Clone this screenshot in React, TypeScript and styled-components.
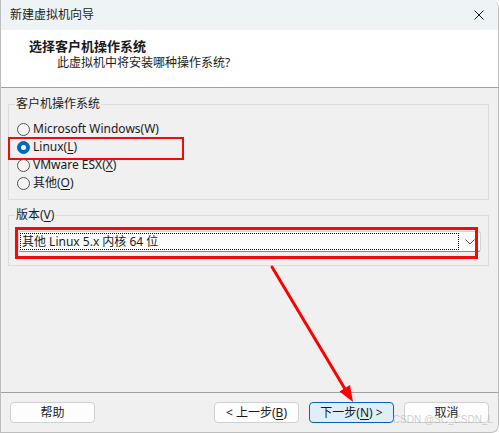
import React from 'react'
import styled, { createGlobalStyle } from 'styled-components'

const GlobalStyle = createGlobalStyle`
    html, body {
        margin: 0;
        padding: 0;
        background: #ffffff;
    }
    * {
        box-sizing: border-box;
    }
`

const FONT = `"Noto Sans", "Noto Sans CJK SC", sans-serif`

const Window = styled.div`
    position: relative;
    width: 499px;
    height: 433px;
    display: flex;
    flex-direction: column;
    background: #f0f0f0;
    border: 1px solid #bdbdbd;
    border-top: none;
    border-radius: 0 8px 8px 0;
    overflow: hidden;
    font: 400 12px/16px ${FONT};
    color: #1a1a1a;
`

const TitleBar = styled.div`
    height: 30px;
    flex: none;
    display: flex;
    align-items: center;
    justify-content: space-between;
    padding: 0 9px 0 9px;
    background: #eef4f5;
`

const CloseButton = styled.svg`
    width: 10px;
    height: 10px;
    margin-right: 5px;
`

const Header = styled.div`
    height: 58px;
    flex: none;
    padding: 8px 0 0 28px;
    background: #ffffff;
    border-bottom: 1px solid #a0a0a0;
`

const HeaderTitle = styled.div`
    font-size: 13px;
    font-weight: 700;
    line-height: 16px;
`

const HeaderSub = styled.div`
    margin: 1px 0 0 28px;
    line-height: 16px;
`

const Body = styled.div`
    flex: 1;
    padding: 8px 9px 0 7px;
    display: flex;
    flex-direction: column;
`

const Group = styled.fieldset<{ $gap?: number }>`
    margin: ${p => p.$gap ?? 0}px 0 0 0;
    padding: 8px 6px ${p => (p.$gap ? 13 : 7)}px 6px;
    border: 1px solid #dcdcdc;
    min-width: 0;
`

const Legend = styled.legend`
    padding: 0 1px;
    line-height: 16px;
`

const OptionList = styled.div`
    display: flex;
    flex-direction: column;
    padding-left: 2px;
`

const Option = styled.label`
    position: relative;
    height: 18px;
    display: flex;
    align-items: center;
    gap: 3px;
`

const RadioDot = styled.span<{ $checked?: boolean }>`
    width: 13px;
    height: 13px;
    border-radius: 50%;
    flex: none;
    display: flex;
    align-items: center;
    justify-content: center;
    background: ${p => (p.$checked ? '#0067c0' : '#f5f5f5')};
    border: 1px solid ${p => (p.$checked ? '#0067c0' : '#555555')};

    &::after {
        content: '';
        width: 5px;
        height: 5px;
        border-radius: 50%;
        background: #ffffff;
        display: ${p => (p.$checked ? 'block' : 'none')};
    }
`

const Key = styled.span`
    text-decoration: underline;
    text-underline-offset: 2px;
`

const Highlight = styled.span<{ $thick: number }>`
    position: absolute;
    border: ${p => p.$thick}px solid #f50a0a;
    pointer-events: none;
`

const Select = styled.div`
    position: relative;
    height: 21px;
    margin: 0 1px 0 3px;
    display: flex;
    align-items: center;
    padding: 0 4px 0 1px;
    background: #fdfdfd;
    border: 1px solid #d4d4d4;
    border-bottom-color: #8a8a8a;
    border-radius: 3px;
`

const SelectValue = styled.div`
    flex: 1;
    height: 17px;
    line-height: 15px;
    padding-left: 1px;
    border: 1px dotted #000000;
`

const Chevron = styled.svg`
    width: 10px;
    height: 6px;
    margin: 0 1px 0 6px;
`

const Footer = styled.div`
    position: relative;
    height: 40px;
    flex: none;
    display: flex;
    justify-content: space-between;
    padding: 9px 9px 0 9px;
    border-top: 1px solid #a0a0a0;
`

const ButtonRow = styled.div`
    display: flex;
    gap: 10px;
`

const Button = styled.button<{ $primary?: boolean }>`
    width: 85px;
    height: 21px;
    padding: 0;
    font: 400 12px/16px ${FONT};
    color: #1a1a1a;
    border-radius: 4px;
    background: ${p => (p.$primary ? '#e0eef9' : '#fdfdfd')};
    border: 1px solid ${p => (p.$primary ? '#0067c0' : '#d0d0d0')};
`

const Watermark = styled.span`
    position: absolute;
    right: 5px;
    bottom: 6px;
    font: 400 10px/12px "Liberation Sans", sans-serif;
    color: rgba(175, 175, 175, 0.6);
    pointer-events: none;
`

const Annotation = styled.svg`
    position: absolute;
    left: -1px;
    top: 0;
    width: 499px;
    height: 433px;
    pointer-events: none;
`

export default function App() {
    return (
        <Window>
            <GlobalStyle />
            <TitleBar>
                <span>新建虚拟机向导</span>
                <CloseButton viewBox="0 0 10 10">
                    <path d="M0.5 0.5 L9.5 9.5 M9.5 0.5 L0.5 9.5" stroke="#1a1a1a" strokeWidth="1" />
                </CloseButton>
            </TitleBar>
            <Header>
                <HeaderTitle>选择客户机操作系统</HeaderTitle>
                <HeaderSub>此虚拟机中将安装哪种操作系统?</HeaderSub>
            </Header>
            <Body>
                <Group>
                    <Legend>客户机操作系统</Legend>
                    <OptionList>
                        <Option>
                            <RadioDot />
                            Microsoft Windows(W)
                        </Option>
                        <Option>
                            <RadioDot $checked />
                            <span>
                                Linux(<Key>L</Key>)
                            </span>
                            <Highlight $thick={2} style={{ left: -9, top: -1, width: 176, height: 23 }} />
                        </Option>
                        <Option>
                            <RadioDot />
                            <span>
                                VMware ESX(<Key>X</Key>)
                            </span>
                        </Option>
                        <Option>
                            <RadioDot />
                            <span>
                                其他(<Key>O</Key>)
                            </span>
                        </Option>
                    </OptionList>
                </Group>
                <Group $gap={7}>
                    <Legend>
                        版本(<Key>V</Key>)
                    </Legend>
                    <Select>
                        <SelectValue>其他 Linux 5.x 内核 64 位</SelectValue>
                        <Chevron viewBox="0 0 10 6">
                            <path d="M0.5 0.5 L5 5 L9.5 0.5" fill="none" stroke="#555" strokeWidth="1" />
                        </Chevron>
                        <Highlight $thick={3} style={{ left: -4, top: -5, width: 463, height: 32 }} />
                    </Select>
                </Group>
            </Body>
            <Footer>
                <Button>帮助</Button>
                <ButtonRow>
                    <Button>
                        &lt; 上一步(<Key>B</Key>)
                    </Button>
                    <Button $primary>
                        下一步(<Key>N</Key>) &gt;
                    </Button>
                    <Button>取消</Button>
                </ButtonRow>
                <Watermark>CSDN @SC_CSDN_L</Watermark>
            </Footer>
            <Annotation viewBox="0 0 499 433">
                <line x1="272" y1="267" x2="345" y2="389" stroke="#ff0000" strokeWidth="3" strokeLinecap="round" />
                <polygon points="339.5,391.5 350,385 353,402" fill="#ff0000" />
            </Annotation>
        </Window>
    )
}
